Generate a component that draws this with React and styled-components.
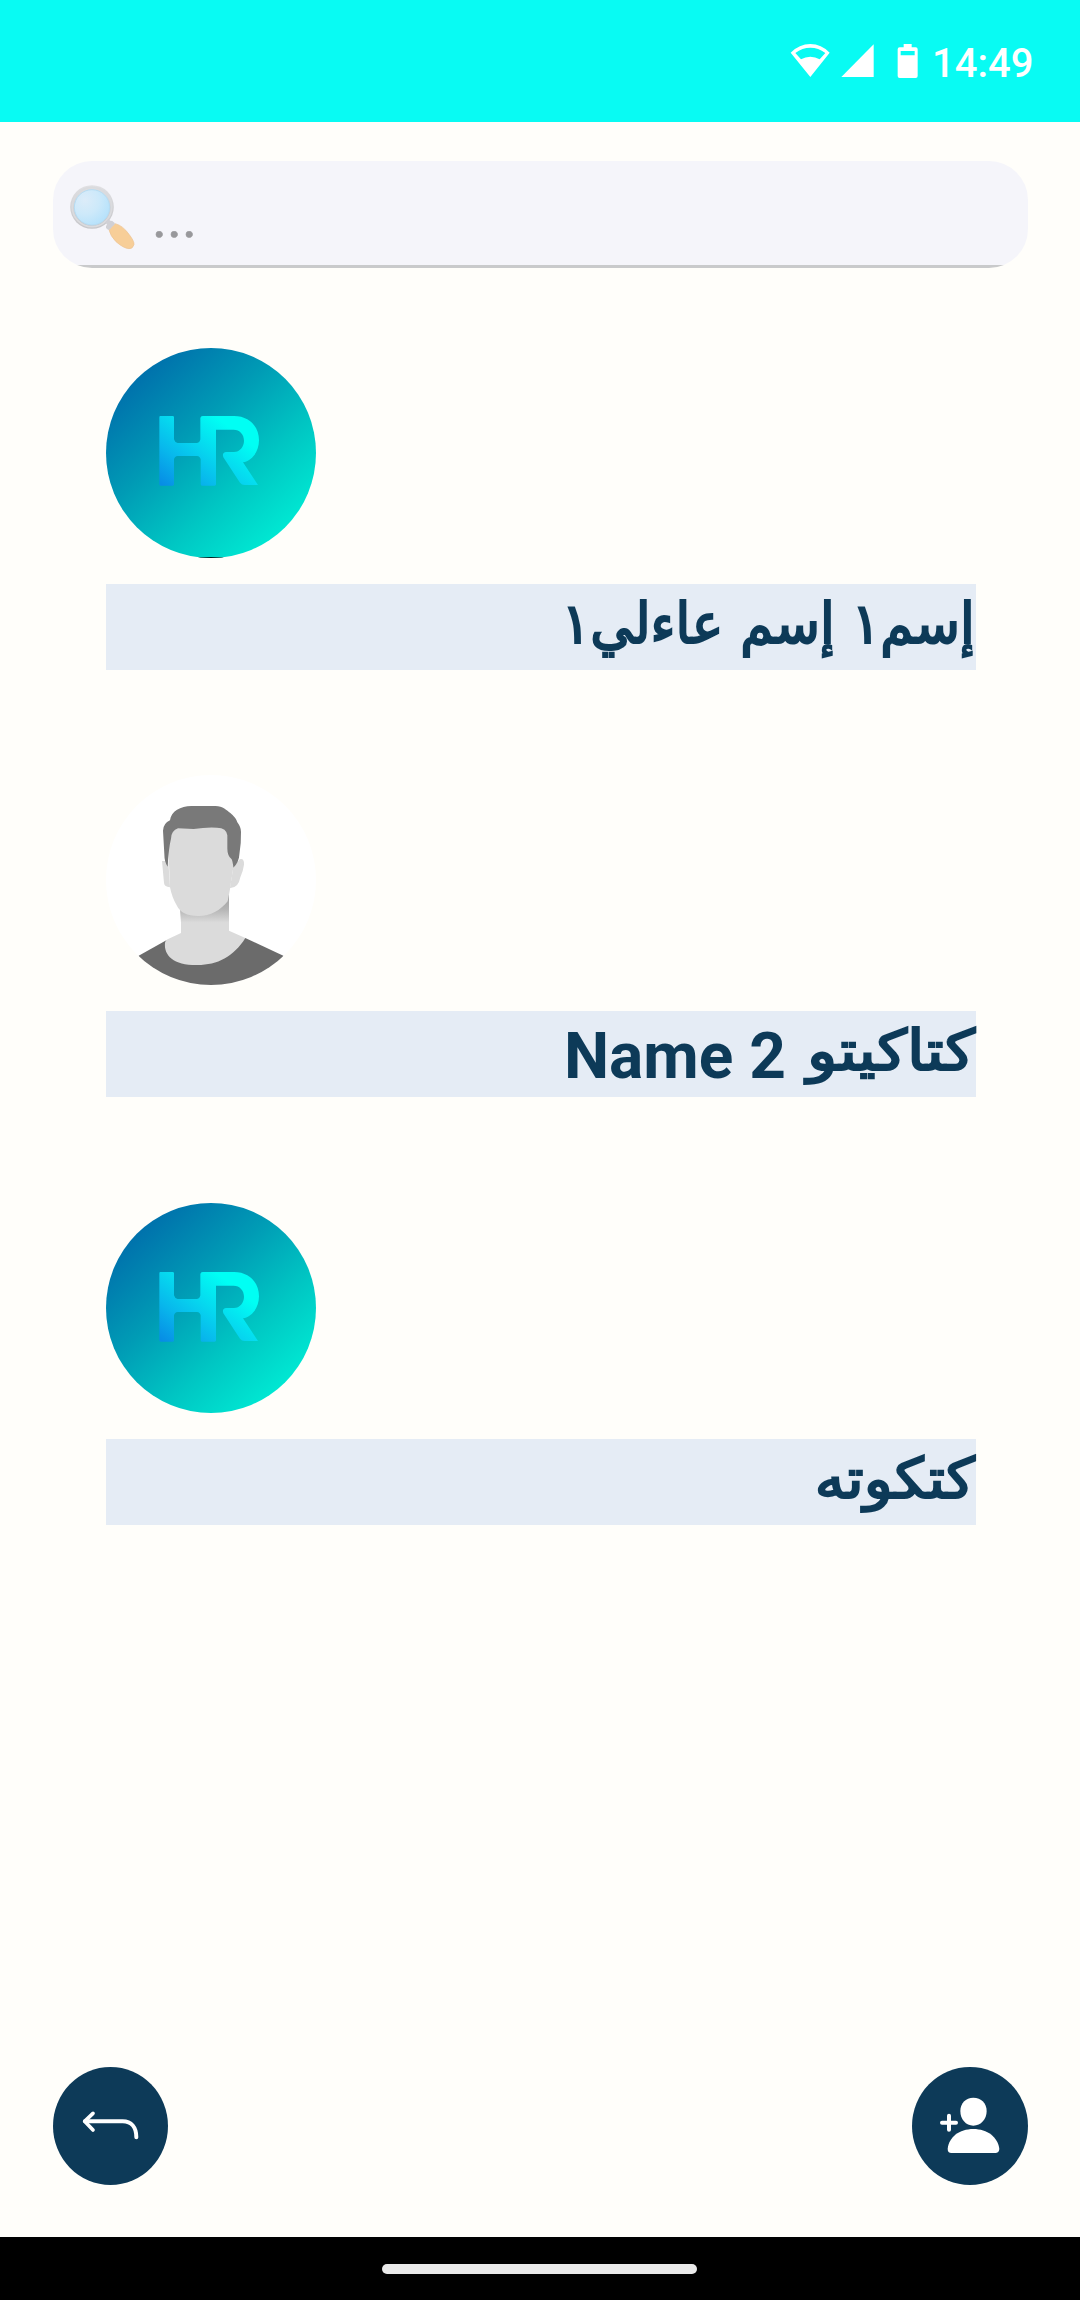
import React from "react";
import styled, { createGlobalStyle } from "styled-components";

const Global = createGlobalStyle`
  body { margin: 0; background: #fffefa; }
  * { box-sizing: border-box; }
`;

const Screen = styled.div`
  width: 1080px;
  height: 2300px;
  display: flex;
  flex-direction: column;
  background: #fffefa;
  font-family: Roboto, "DejaVu Sans", sans-serif;
  overflow: hidden;
`;

const StatusBar = styled.header`
  flex: none;
  height: 122px;
  display: flex;
  align-items: flex-start;
  padding: 43px 0 0 790px;
  background: #08fbf3;
`;

const Clock = styled.time`
  margin-left: 14px;
  margin-top: -3px;
  font-size: 40px;
  line-height: 47px;
  font-weight: 500;
  color: #fff;
`;

const SearchField = styled.div`
  flex: none;
  width: 975px;
  height: 107px;
  margin: 39px 0 0 53px;
  padding: 23px 16px 0;
  display: flex;
  border-radius: 39px;
  background: linear-gradient(#f5f5fa 0 104px, #c9cacb 104px);
`;

const Placeholder = styled.span`
  margin-left: 17px;
  font-size: 57px;
  line-height: 67px;
  color: #98989b;
  -webkit-text-stroke: 0.6px #98989b;
`;

const People = styled.main`
  flex: 1;
  display: flex;
  flex-direction: column;
  padding: 80px 104px 0 106px;
`;

const Person = styled.article`
  flex: none;
  height: 428px;
  display: flex;
  flex-direction: column;
  &:first-child { height: 427px; }
`;

const Picture = styled.svg`
  display: block;
  flex: none;
  width: 210px;
  height: 210px;
  border-radius: 50%;
`;

const Name = styled.h2`
  margin: 26px 0 0;
  height: 86px;
  padding-right: 1px;
  direction: rtl;
  display: flex;
  align-items: flex-start;
  background: #e5ecf5;
  color: #0d3a58;
  white-space: pre;
`;

const ArabicRun = styled.span`
  display: block;
  font: 400 56px/80px "DejaVu Sans", sans-serif;
  -webkit-text-stroke: 2.2px #0d3a58;
  transform: scaleX(${(p) => p.$stretch});
  transform-origin: right;
`;

const LatinRun = styled.span`
  display: block;
  margin-right: 39px;
  direction: ltr;
  font: 700 64px/92px Roboto, sans-serif;
`;

const Actions = styled.footer`
  flex: none;
  height: 170px;
  padding: 0 52px 0 53px;
  display: flex;
  justify-content: space-between;
`;

const RoundButton = styled.button`
  width: ${(p) => p.$width}px;
  height: 118px;
  padding: 0;
  border: 0;
  border-radius: 50%;
  background: #0d3a58;
  svg { display: block; width: 100%; height: 100%; }
`;

const NavBar = styled.nav`
  flex: none;
  height: 63px;
  padding: 27px 0 0 382px;
  background: #000;
`;

const Handle = styled.div`
  width: 315px;
  height: 10px;
  border-radius: 5px;
  background: #eaeaea;
`;

function StatusIcons() {
  return (
    <svg width="128" height="36" viewBox="91 129 384 108" fill="#fff">
      <path fillRule="evenodd" d="M152 231 93 158Q119 132 152 132T210 158ZM124 178Q137 170 152 170T180 178L197 159Q176 143 152 143T107 159Z" />
      <path d="M245 231 342 133V231Z" />
      <path fillRule="evenodd" d="M432 132H456V142H468Q474 142 474 148V228Q474 234 468 234H420Q414 234 414 228V148Q414 142 420 142H432ZM423 153V166H465V153Z" />
    </svg>
  );
}

function Magnifier() {
  return (
    <svg width="66" height="66" viewBox="117 132 198 198">
      <defs>
        <radialGradient id="lens" cx=".3" cy=".3" r=".8">
          <stop stopColor="#dcecf9" />
          <stop offset=".5" stopColor="#cde9fa" />
          <stop offset="1" stopColor="#b4e1fb" />
        </radialGradient>
        <linearGradient id="rim" x2="0" y2="1">
          <stop stopColor="#e0e0e3" />
          <stop offset="1" stopColor="#c6c6c9" />
        </linearGradient>
      </defs>
      <path d="M237 269 256 251Q279 257 297 283Q313 303 312 314Q307 328 297 326Q281 325 258 305Q241 288 237 269Z" fill="#f7ce98" stroke="#ecc394" strokeWidth="2" />
      <circle cx="186" cy="201" r="65.5" fill="url(#rim)" />
      <circle cx="186" cy="201" r="59" fill="none" stroke="#dadbde" strokeWidth="5" />
      <circle cx="186" cy="202" r="53" fill="url(#lens)" stroke="#b6dcf3" strokeWidth="3" />
      <path d="M226 246 234 238 243 243 246 242 255 250Q252 257 246 260Q242 268 235 270L228 264V258L231 254Z" fill="#d0d0d5" />
    </svg>
  );
}

function LogoPicture({ id, base, shift = 0 }) {
  return (
    <Picture viewBox="48 54 630 630">
      <defs>
        <linearGradient id={id + "bg"} gradientUnits="userSpaceOnUse" x1="130" y1="120" x2="575" y2="615">
          <stop stopColor="#006dab" />
          <stop offset=".38" stopColor="#009bb5" />
          <stop offset=".7" stopColor="#00c6c3" />
          <stop offset="1" stopColor="#00e9d3" />
        </linearGradient>
        <linearGradient id={id + "fg"} gradientUnits="userSpaceOnUse" x1="220" y1="467" x2="400" y2="240">
          <stop stopColor="#078de5" />
          <stop offset=".3" stopColor="#08b7ec" />
          <stop offset=".55" stopColor="#06d6ef" />
          <stop offset=".9" stopColor="#00fff4" />
        </linearGradient>
      </defs>
      <path d="M48 54H678V684H48Z" fill={`url(#${id}bg)`} />
      <path
        transform={`translate(0 ${shift})`}
        fill={`url(#${id}fg)`}
        d="M211 258H248Q252 258 252 262V328Q254 337 263 339H321Q330 337 331 328V264Q332 258 338 258H432C477 258 507 289 507 331C507 365 486 392 459 397L504 465H464Q455 465 450 458L400 382Q395 367 409 366H432C449 366 462 350 462 332C462 313 449 299 431 299H378V463Q378 467 374 467H336Q332 467 332 462V388Q330 379 321 378H263Q254 379 252 388V463Q252 467 248 467H212Q208 467 208 463V262Q208 258 211 258Z"
      />
      {base && <path d="M325 681H400V684H325Z" fill="#001f20" />}
    </Picture>
  );
}

function PortraitPicture() {
  return (
    <Picture viewBox="48 45 630 630">
      <defs>
        <linearGradient id="neck" gradientUnits="userSpaceOnUse" x1="0" y1="415" x2="0" y2="488">
          <stop stopColor="#a5a5a5" />
          <stop offset=".45" stopColor="#b5b5b5" />
          <stop offset="1" stopColor="#dbdbdb" />
        </linearGradient>
      </defs>
      <path d="M48 45H678V675H48Z" fill="#fff" />
      <path d="M146 587 229 541 466 534 580 587V675H146Z" fill="#6b6b6b" />
      <path d="M267 400H417V512L466 534C431 590 382 615 323 615C252 616 221 587 225 548Q226 541 233 538L273 519V480Z" fill="#dbdbdb" />
      <path d="M267 400H417V488H273Z" fill="url(#neck)" />
      <path d="M216 303H235L240 382Q223 380 222 369ZM430 322 449 298Q463 294 462 314Q459 335 451 352Q445 385 420 384Z" fill="#dbdbdb" />
      <path d="M232 190H420L430 322 420 388L413 424C391 452 359 469 324 468C290 467 271 459 260 436Q246 413 240 382Z" fill="#dbdbdb" />
      <path d="M233 320Q223 306 223 282L219 212Q220 190 240 181C243 154 272 138 304 138H374C398 137 410 151 421 159Q438 173 442 187Q453 202 453 215Q454 248 448 284Q447 306 430 323Q428 303 425 298Q412 287 412 266V226Q410 204 381 203Q349 201 311 207L264 205Q244 212 243 236Q236 264 233 320Z" fill="#797979" />
    </Picture>
  );
}

export default function App() {
  return (
    <>
      <Global />
      <Screen>
        <StatusBar>
          <StatusIcons />
          <Clock>14:49</Clock>
        </StatusBar>
        <SearchField>
          <Magnifier />
          <Placeholder>...</Placeholder>
        </SearchField>
        <People>
          <Person>
            <LogoPicture id="a" base />
            <Name>
              <ArabicRun $stretch={0.948}>إسم١ إسم عاءلي١</ArabicRun>
            </Name>
          </Person>
          <Person>
            <PortraitPicture />
            <Name>
              <ArabicRun $stretch={1.12}>كتاكيتو</ArabicRun>
              <LatinRun>Name 2</LatinRun>
            </Name>
          </Person>
          <Person>
            <LogoPicture id="c" shift={3} />
            <Name>
              <ArabicRun $stretch={1.075}>كتكوته</ArabicRun>
            </Name>
          </Person>
        </People>
        <Actions>
          <RoundButton $width={115} aria-label="Back">
            <svg viewBox="39 51 345 354" fill="none" stroke="#fff" strokeLinecap="round" strokeLinejoin="round">
              <path d="M135 214H248C274 214 289 232 289 262" strokeWidth="12" />
              <path d="M159 190 134 214 159 240" strokeWidth="11" />
            </svg>
          </RoundButton>
          <RoundButton $width={116} aria-label="Add person">
            <svg viewBox="36 51 348 354" fill="#fff">
              <path d="M220 143C244 143 260 160 260 183C260 207 243 227 220 227C197 227 181 207 181 183C181 160 197 143 220 143Z" />
              <path d="M143 297C146 262 178 237 220 237C262 237 294 262 298 297Q297 309 286 309H154Q143 309 143 297Z" />
              <path d="M147 197V239M126 218H168" stroke="#fff" strokeWidth="12" strokeLinecap="round" />
            </svg>
          </RoundButton>
        </Actions>
        <NavBar><Handle /></NavBar>
      </Screen>
    </>
  );
}
